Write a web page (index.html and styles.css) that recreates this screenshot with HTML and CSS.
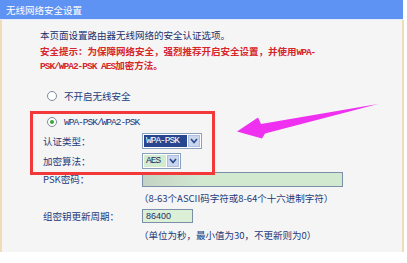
FILE: index.html
```html
<!DOCTYPE html>
<html lang="zh-CN">
<head>
<meta charset="utf-8">
<title>无线网络安全设置</title>
<link rel="stylesheet" href="styles.css">
</head>
<body>
<div class="page">
  <div class="header">无线网络安全设置</div>
  <div class="content">
    <p class="intro">本页面设置路由器无线网络的安全认证选项。</p>
    <p class="warn">安全提示：为保障网络安全，强烈推荐开启安全设置，并使用<span class="mono">WPA-</span><br><span class="mono">PSK/WPA2-PSK AES</span>加密方法。</p>
    <div class="form">
      <div class="row r-off">
        <span class="radio"></span><span class="radio-text">不开启无线安全</span>
      </div>
      <div class="row r-wpa">
        <span class="radio checked"></span><span class="radio-text mono">WPA-PSK/WPA2-PSK</span>
      </div>
      <div class="row r-auth">
        <span class="label">认证类型：</span>
        <div class="select sel-auth">
          <span class="sel-value selected mono">WPA-PSK</span>
          <span class="sel-btn"><svg viewBox="0 0 8 6" width="8" height="6"><polyline points="1,1 4,4.5 7,1" fill="none" stroke="#2b4a8a" stroke-width="1.6"/></svg></span>
        </div>
      </div>
      <div class="row r-enc">
        <span class="label">加密算法：</span>
        <div class="select sel-enc">
          <span class="sel-value green mono">AES</span>
          <span class="sel-btn"><svg viewBox="0 0 8 6" width="8" height="6"><polyline points="1,1 4,4.5 7,1" fill="none" stroke="#2b4a8a" stroke-width="1.6"/></svg></span>
        </div>
      </div>
      <div class="row r-psk">
        <span class="label">PSK密码：</span>
        <div class="input input-psk"></div>
      </div>
      <div class="row hint r-hint1">
        <span class="label"></span>
        <span class="hint-text">（8-63个ASCII码字符或8-64个十六进制字符）</span>
      </div>
      <div class="row r-grp">
        <span class="label">组密钥更新周期：</span>
        <div class="input input-grp">86400</div>
      </div>
      <div class="row hint r-hint2">
        <span class="label"></span>
        <span class="hint-text">（单位为秒，最小值为30，不更新则为0）</span>
      </div>
    </div>
  </div>
  <div class="mark-box"></div>
  <svg class="arrow" viewBox="0 0 407 263" width="407" height="263">
    <polygon points="237,131.5 258,117.5 261,124 378,104 265,133.5 262,138.5" fill="#f030f0"/>
  </svg>
</div>
</body>
</html>
```

FILE: styles.css
```css
html, body {
  margin: 0;
  padding: 0;
  background: #ffffff;
}
body {
  font-family: "Noto Sans CJK SC", "Noto Sans", sans-serif;
  font-size: 9.5px;
  color: #233a7a;
}
.page {
  position: relative;
  width: 407px;
  height: 263px;
}
.header {
  width: 403px;
  height: 20px;
  background: #5e93f4;
  border-bottom: 1px solid #e4ecf8;
  color: #ffffff;
  line-height: 20px;
  padding-left: 6px;
  box-sizing: border-box;
}
.content {
  width: 404px;
  height: 232px;
  box-sizing: border-box;
  background: #f5f5f5;
  border-left: 2px solid #f1dcba;
  border-right: 2px solid #f1dcba;
  padding-top: 8px;
}
.intro {
  margin: 0;
  padding-left: 38px;
  line-height: 15px;
  color: #1c2f6a;
}
.warn {
  margin: 2px 0 0;
  padding-left: 38px;
  line-height: 12px;
  color: #d7262c;
  font-weight: bold;
}
.mono {
  font-family: "Liberation Mono", "DejaVu Sans Mono", monospace;
  letter-spacing: -1px;
}
.form {
  margin-top: 15px;
  padding-left: 41px;
}
.row {
  display: flex;
  align-items: center;
  height: 16px;
}
.label {
  width: 99px;
  flex: none;
}
.r-off { margin-top: 0; }
.r-wpa { margin-top: 10px; }
.r-auth { margin-top: 3px; }
.r-enc { margin-top: 4px; }
.r-psk { margin-top: 2px; }
.r-hint1 { margin-top: 4px; height: 14px; }
.r-grp { margin-top: 3px; }
.r-hint2 { margin-top: 4px; height: 14px; }
.radio {
  width: 8px;
  height: 8px;
  border: 1px solid #7d8a9c;
  border-radius: 50%;
  background: #ffffff;
  margin-left: 4px;
  margin-right: 7px;
  position: relative;
  flex: none;
}
.radio.checked::after {
  content: "";
  position: absolute;
  left: 2px;
  top: 2px;
  width: 4px;
  height: 4px;
  border-radius: 50%;
  background: #35a835;
}
.radio-text {
  color: #233a7a;
}
.select {
  display: flex;
  height: 16px;
  box-sizing: border-box;
  border: 1px solid #8aa0bf;
  background: #ffffff;
  padding: 1px;
  gap: 1px;
}
.sel-auth { width: 60px; }
.sel-enc { width: 39px; }
.sel-value {
  flex: 1;
  line-height: 12px;
  padding-left: 2px;
  font-size: 9.5px;
}
.sel-value.selected {
  background: #27468f;
  color: #ffffff;
}
.sel-value.green {
  background: #d3ebce;
  color: #1c2f6a;
}
.sel-btn {
  width: 12px;
  flex: none;
  background: #c9d6ee;
  border: 1px solid #aebfdd;
  box-sizing: border-box;
  display: flex;
  align-items: center;
  justify-content: center;
}
.input {
  height: 15px;
  box-sizing: border-box;
  border: 1px solid #7b8fa8;
  background: #d2e9d0;
  line-height: 13px;
  padding-left: 3px;
  color: #1c2f6a;
}
.input-psk {
  width: 201px;
  background: linear-gradient(90deg, #c4d3c4 0, #d2e9d0 60px, #d2e9d0 100%);
}
.input-grp {
  width: 51px;
  height: 14px;
  line-height: 12px;
  font-family: "Liberation Sans", "Noto Sans", sans-serif;
  font-size: 9px;
  background: #dcf0d8;
}
.hint-text {
  margin-left: -3px;
  color: #233a7a;
}
.mark-box {
  position: absolute;
  left: 30px;
  top: 111px;
  width: 185px;
  height: 64px;
  box-sizing: border-box;
  border: 3px solid #f23838;
}
.arrow {
  position: absolute;
  left: 0;
  top: 0;
}
```
